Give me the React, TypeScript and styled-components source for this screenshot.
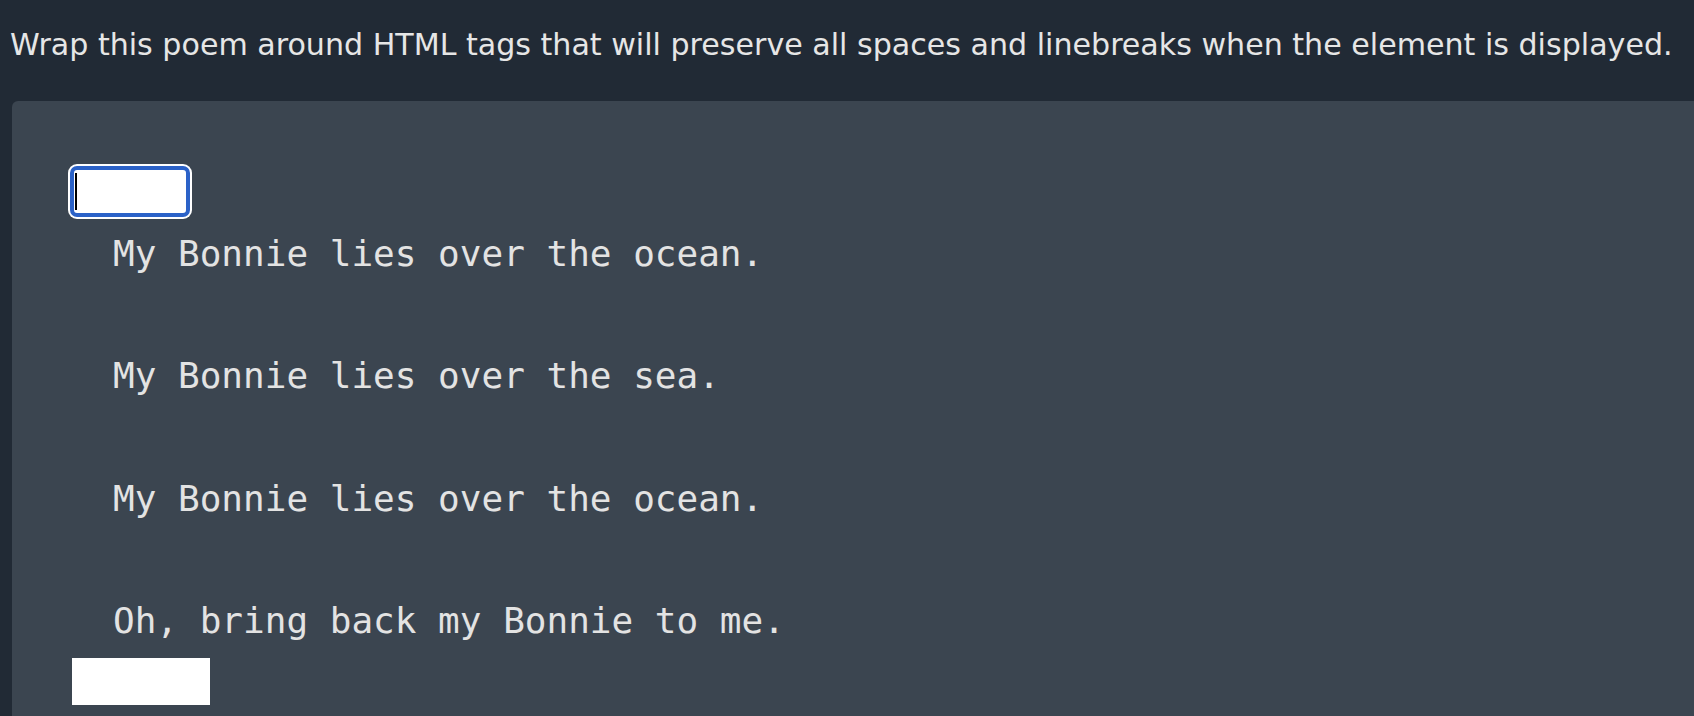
import React from "react";
import styled, { createGlobalStyle } from "styled-components";

const GlobalStyle = createGlobalStyle`
  html, body {
    margin: 0;
    padding: 0;
    background: #212a35;
  }
  body {
    font-family: "DejaVu Sans", "Liberation Sans", sans-serif;
  }
`;

const Page = styled.div`
  width: 100vw;
  height: 716px;
  overflow: hidden;
  background: #212a35;
  display: flex;
  flex-direction: column;
`;

const Prompt = styled.p`
  margin: 0 0 36px 0;
  padding: 25px 0 0 10px;
  height: 40px;
  font-size: 30.1px;
  line-height: 40px;
  color: #e6e6e6;
  white-space: nowrap;
`;

const Panel = styled.div`
  margin-left: 12px;
  margin-right: -24px;
  flex: 1;
  background: #3b4550;
  border-radius: 6px 0 0 0;
  padding: 65px 0 0 58px;
  display: flex;
  flex-direction: column;
  align-items: flex-start;
`;

const InputBox = styled.div`
  box-sizing: border-box;
  width: 120px;
  height: 51px;
  background: #ffffff;
  border: 4px solid #2b62c8;
  border-radius: 7px;
  box-shadow: 0 0 0 2px #ffffff;
  padding: 3px 0 3px 1px;
  display: flex;
`;

const Caret = styled.span`
  width: 2px;
  background: #000000;
`;

const Poem = styled.div`
  margin: 6px 0 0 43px;
  font-family: "DejaVu Sans Mono", "Liberation Mono", monospace;
  font-size: 36px;
  line-height: 61.2px;
  color: #e3e3e3;
  white-space: pre;
`;

const ClosingBox = styled.div`
  margin: 7px 0 0 2px;
  width: 138px;
  height: 47px;
  background: #ffffff;
`;

const poem = [
  "My Bonnie lies over the ocean.",
  "",
  "My Bonnie lies over the sea.",
  "",
  "My Bonnie lies over the ocean.",
  "",
  "Oh, bring back my Bonnie to me.",
].join("\n");

export default function App() {
  return (
    <Page>
      <GlobalStyle />
      <Prompt>
        Wrap this poem around HTML tags that will preserve all spaces and linebreaks when the element is displayed.
      </Prompt>
      <Panel>
        <InputBox>
          <Caret />
        </InputBox>
        <Poem>{poem}</Poem>
        <ClosingBox />
      </Panel>
    </Page>
  );
}
